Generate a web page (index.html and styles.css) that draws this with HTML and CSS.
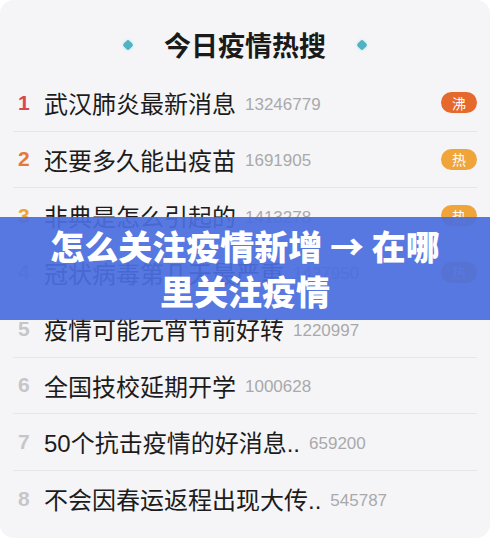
FILE: index.html
```html
<!DOCTYPE html>
<html>
	<head>
		<meta charset="utf-8">
		<title>今日疫情热搜</title>
		<link rel="stylesheet" href="styles.css">
	</head>
	<body>
		<div class="card">
			<header class="head">
				<span class="dot"></span>
				<h1>今日疫情热搜</h1>
				<span class="dot"></span>
			</header>
			<ul class="list">
				<li class="row">
					<span class="rank r1">1</span>
					<span class="name">武汉肺炎最新消息</span>
					<span class="count">13246779</span>
					<span class="tag boil">沸</span>
				</li>
				<li class="row">
					<span class="rank r2">2</span>
					<span class="name">还要多久能出疫苗</span>
					<span class="count">1691905</span>
					<span class="tag hot">热</span>
				</li>
				<li class="row">
					<span class="rank r3">3</span>
					<span class="name">非典是怎么引起的</span>
					<span class="count">1413278</span>
					<span class="tag hot">热</span>
				</li>
				<li class="row">
					<span class="rank">4</span>
					<span class="name">冠状病毒第几天最严重</span>
					<span class="count">1437950</span>
					<span class="tag hot">热</span>
				</li>
				<li class="row">
					<span class="rank">5</span>
					<span class="name">疫情可能元宵节前好转</span>
					<span class="count">1220997</span>
				</li>
				<li class="row">
					<span class="rank">6</span>
					<span class="name">全国技校延期开学</span>
					<span class="count">1000628</span>
				</li>
				<li class="row">
					<span class="rank">7</span>
					<span class="name">50个抗击疫情的好消息..</span>
					<span class="count">659200</span>
				</li>
				<li class="row">
					<span class="rank">8</span>
					<span class="name">不会因春运返程出现大传..</span>
					<span class="count">545787</span>
				</li>
			</ul>
			<div class="banner">怎么关注疫情新增 → 在哪<br>里关注疫情</div>
		</div>
	</body>
</html>
```

FILE: styles.css
```css
* {
	margin: 0;
	padding: 0;
	box-sizing: border-box;
}
body {
	background: #ffffff;
	font-family: "Liberation Sans", "Noto Sans CJK SC", sans-serif;
}
.card {
	position: relative;
	width: 490px;
	height: 538px;
	background: #f5f5f7;
	border-radius: 14px;
	overflow: hidden;
}
.head {
	height: 75px;
	display: flex;
	align-items: center;
	justify-content: center;
	gap: 32px;
	padding-top: 14px;
}
.head h1 {
	font-family: "Noto Sans CJK SC", sans-serif;
	font-size: 27px;
	font-weight: bold;
	color: #1a1a1a;
}
.dot {
	width: 8px;
	height: 8px;
	background: #4fb3c4;
	transform: rotate(45deg);
	border-radius: 2px;
	box-shadow: 0 0 4px #bfe6ee;
}
.list {
	list-style: none;
	padding: 0 13px;
}
.row {
	display: flex;
	align-items: center;
	height: 56.5px;
	border-bottom: 1px solid #e6e6ea;
	padding: 0 0 0 5px;
}
.row:last-child {
	border-bottom: none;
}
.rank {
	width: 26px;
	font-size: 21px;
	font-weight: bold;
	color: #c6c6c8;
}
.r1 {
	color: #d64a4f;
}
.r2 {
	color: #e47a3a;
}
.r3 {
	color: #eea536;
}
.name {
	font-size: 24px;
	color: #1c1c1c;
}
.count {
	margin-left: 9px;
	padding-top: 4px;
	font-size: 17px;
	color: #a9a9ab;
}
.tag {
	margin-left: auto;
	width: 36px;
	height: 21px;
	border-radius: 11px;
	color: #ffffff;
	font-size: 14px;
	display: flex;
	align-items: center;
	justify-content: center;
}
.boil {
	background: #e5682c;
}
.hot {
	background: #efa53a;
}
.banner {
	position: absolute;
	left: 0;
	right: 0;
	top: 217px;
	height: 103px;
	padding-top: 6px;
	background: rgba(74, 110, 222, 0.93);
	color: #ffffff;
	font-family: "Noto Sans CJK SC", sans-serif;
	font-size: 34px;
	font-weight: 900;
	line-height: 45px;
	text-align: center;
}
```
